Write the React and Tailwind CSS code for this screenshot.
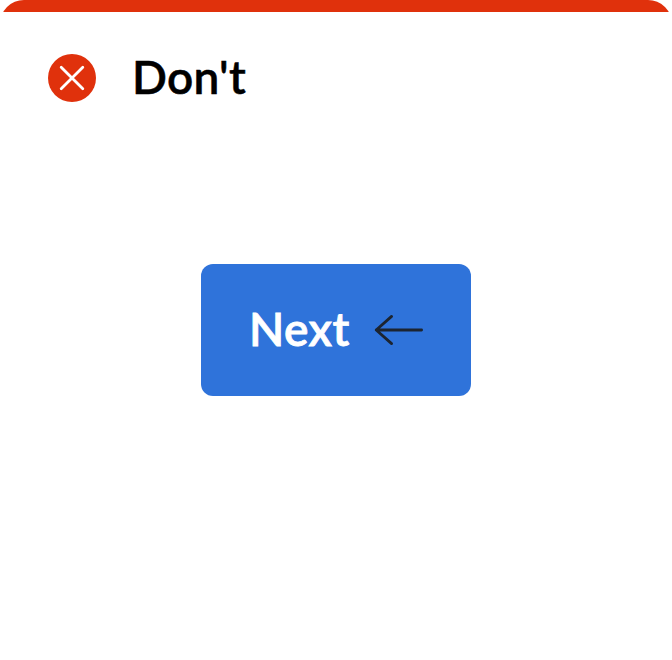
function ErrorBadge() {
  return (
    <svg className="size-12 shrink-0" viewBox="0 0 48 48" fill="none" aria-hidden="true">
      <circle cx="24" cy="24" r="24" fill="#e0310c" />
      <path d="M13.2 13.2 34.8 34.8M34.8 13.2 13.2 34.8" stroke="white" strokeWidth="2.8" strokeLinecap="round" />
    </svg>
  );
}

function ArrowLeft() {
  return (
    <svg className="ml-auto h-8 w-[50px] shrink-0" viewBox="0 0 50 32" fill="none" aria-hidden="true">
      <path
        d="M47.6 16H2.2M17.6 2.4 2.2 16 17.6 29.6"
        stroke="#1c2430"
        strokeWidth="2.8"
        strokeLinecap="round"
        strokeLinejoin="round"
      />
    </svg>
  );
}

export default function App() {
  return (
    <main className="flex h-[660px] w-[672px] flex-col overflow-hidden rounded-t-3xl bg-white font-['Lato',sans-serif]">
      <div className="h-3 shrink-0 bg-[#e0310c]" />
      <header className="flex h-[132px] shrink-0 items-center pl-12">
        <ErrorBadge />
        <h1 className="ml-[36px] pb-0.5 text-[46px] leading-[48px] font-semibold tracking-[0.3px] text-black [-webkit-text-stroke:0.5px]">Don't</h1>
      </header>
      <section className="mt-[120px] flex justify-center">
        <button className="flex h-33 w-[270px] items-center rounded-xl bg-[#2f73da] pr-[47px] pl-12 text-[46px] leading-[48px] font-semibold text-white">
          <span className="pb-0.5 tracking-[0.4px] [-webkit-text-stroke:0.8px]">Next</span>
          <ArrowLeft />
        </button>
      </section>
    </main>
  );
}
